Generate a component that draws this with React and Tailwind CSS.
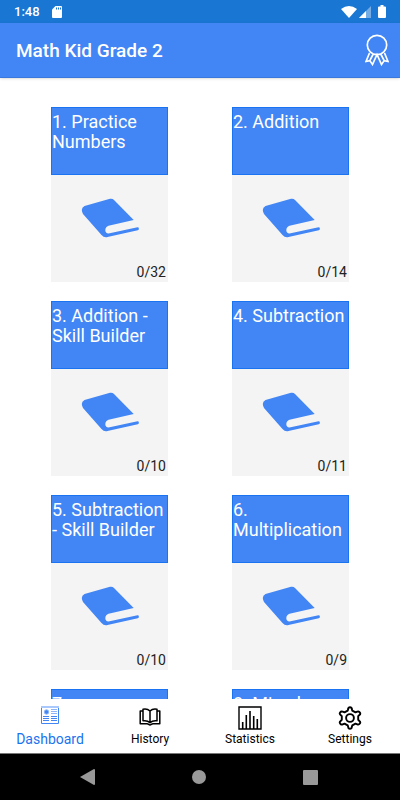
const lessons = [
  { title: '1. Practice Numbers', done: 0, total: 32 },
  { title: '2. Addition', done: 0, total: 14 },
  { title: '3. Addition - Skill Builder', done: 0, total: 10 },
  { title: '4. Subtraction', done: 0, total: 11 },
  { title: '5. Subtraction - Skill Builder', done: 0, total: 10 },
  { title: '6. Multiplication', done: 0, total: 9 },
  { title: '7. Multiplication - Skill Builder', done: 0, total: 10 },
  { title: '8. Mixed Operations', done: 0, total: 10 },
]

const tabs = [
  { name: 'Dashboard', href: '#dashboard', icon: DashboardIcon, active: true },
  { name: 'History', href: '#history', icon: HistoryIcon },
  { name: 'Statistics', href: '#statistics', icon: StatisticsIcon },
  { name: 'Settings', href: '#settings', icon: SettingsIcon },
]

function DashboardIcon() {
  return (
    <svg viewBox="0 0 18 18" className="h-[18px] w-[18px]" fill="none" stroke="#4285f4">
      <path d="M.5 .5h17v17H.5z" fill="#fff" />
      <path d="M0 1h18" strokeWidth="2" stroke="#a9c8fb" />
      <circle cx="5.500" cy="6" r="2.200" fill="#4285f4" stroke="#8db5f8" />
      <path d="M10 3.500h6M10 5.500h6M10 7.500h6" stroke="#8db5f8" />
      <path d="M2 10.500h6M10 10.500h6M2 12.500h6M10 12.500h6M2 14.500h6M10 14.500h6" />
    </svg>
  )
}

function HistoryIcon() {
  return (
    <svg viewBox="0 -2 22 20" className="h-5 w-[22px]" fill="none" stroke="#000" strokeWidth="1.500" strokeLinejoin="round">
      <path d="M11 3C9 1 6.500 .7 4 1.200V12.800c2.500-.4 5 0 7 1.800 2-1.800 4.500-2.200 7-1.800V1.200C15.500 .7 13 1 11 3zM11 3v11.500" />
      <path d="M4 3H1.200v12.800H8c1.500 0 1.800 1.200 3 1.200s1.500-1.200 3-1.200h6.800V3H18" />
    </svg>
  )
}

function StatisticsIcon() {
  return (
    <svg viewBox="0 0 24 24" className="h-6 w-6" fill="none" stroke="#000">
      <path d="M1 1h22v22H1z" strokeWidth="1.400" />
      <path d="M4.700 16v7M8.300 9v14M12 5v18M15.700 10v13M19.300 13v10" strokeWidth="1.600" />
    </svg>
  )
}

function SettingsIcon() {
  return (
    <svg viewBox="0 0 24 24" className="h-6 w-6" fill="none" stroke="#000" strokeWidth="1.900" strokeLinejoin="round">
      <path d="M10.200 3Q10.300 1.200 12 1.200T13.800 3L14.300 4.600L17.500 6.400L19.300 5.700Q21 5 21.900 6.500T21.400 9L20.200 10.200V13.800L21.400 15Q22.800 16.200 21.900 17.500T19.300 18.300L17.500 17.600L14.300 19.400L13.800 21Q13.700 22.800 12 22.800T10.200 21L9.700 19.400L6.500 17.600L4.700 18.300Q3 19 2.100 17.500T2.600 15L3.800 13.800V10.200L2.600 9Q1.200 7.800 2.100 6.500T4.700 5.700L6.500 6.400L9.700 4.600z" />
      <circle cx="12" cy="12" r="3.900" />
    </svg>
  )
}

function AwardIcon() {
  return (
    <svg viewBox="0 0 24 32" className="h-8 w-6" fill="none" stroke="#fff" strokeWidth="1.700">
      <circle cx="12" cy="11" r="9.700" />
      <path d="M4.500 19L1 27.500l3.800-.9L7.500 30.500L12 20.500l4.500 10 2.700-3.900 3.800.9L19.500 19M4.800 26.600L8 20.500M19.200 26.600L16 20.500" />
    </svg>
  )
}

function BookIcon() {
  return (
    <svg viewBox="0 0 58 40" className="h-10 w-[58px]" fill="#4285f4">
      <path d="M3.500 8L29 .8Q31.500 .3 33 2L52.700 22L27.500 27.800C23.500 29 23 35.300 27.500 35.600L56.500 29.300Q57.800 29.200 57.900 30.700Q57.900 31.900 56.800 32.200L26.500 39Q23 39.800 20.500 37L2 16Q-1 10.500 3.500 8z" />
    </svg>
  )
}

function StatusBar() {
  return (
    <div className="flex h-[23px] shrink-0 items-center bg-[#1976d2] px-3.5 text-white">
      <span className="text-[13px] font-medium">1:48</span>
      <svg viewBox="0 0 10 12" className="ml-3 h-3 w-2.5" fill="#fff">
        <path d="M3.500 0H9q1 0 1 1v10q0 1-1 1H1q-1 0-1-1V3.500z" />
        <path d="M4.500 1.500v2M6.500 1.500v2M8.500 1.500v2" stroke="#1976d2" />
      </svg>
      <div className="ml-auto flex items-center">
        <svg viewBox="0 0 16 12" className="h-3 w-4" fill="#fff">
          <path d="M0 3Q8-3 16 3L8 12z" />
        </svg>
        <svg viewBox="0 0 12 12" className="ml-0.5 h-3 w-3" fill="#fff">
          <path d="M12 0v12H0z" opacity=".4" />
          <path d="M7 5v7H0z" />
        </svg>
        <svg viewBox="0 0 8 13" className="ml-[7px] h-[13px] w-2" fill="#fff">
          <path d="M2.500 0h3v1.500H7q1 0 1 1V12q0 1-1 1H1q-1 0-1-1V2.500q0-1 1-1h1.500z" />
        </svg>
      </div>
    </div>
  )
}

function LessonCard({ lesson }) {
  return (
    <button type="button" className="flex h-[175px] w-[117px] flex-col bg-[#f4f4f4] text-left">
      <span className="block h-[68px] w-full border border-[#1a73f0] bg-[#4285f4] pt-1 text-lg/5 text-white">
        {lesson.title}
      </span>
      <span className="flex w-full flex-1 items-start justify-center pt-[23px]">
        <BookIcon />
      </span>
      <span className="w-full pr-0.5 pb-0.5 text-right text-sm/4 text-[#222]">
        {lesson.done}/{lesson.total}
      </span>
    </button>
  )
}

function TabBar() {
  return (
    <nav className="grid h-[54px] shrink-0 grid-cols-4 bg-white">
      {tabs.map((tab) => (
        <a key={tab.name} href={tab.href} className="flex flex-col items-center">
          <span className="flex h-8 items-start pt-[7px]">
            <tab.icon />
          </span>
          <span className={tab.active ? 'text-sm/4 text-[#1a73f0]' : 'text-xs/4 text-black'}>
            {tab.name}
          </span>
        </a>
      ))}
    </nav>
  )
}

function SystemNav() {
  return (
    <div className="flex h-[47px] shrink-0 items-center justify-around border-t border-[#777] bg-black pr-[34px] pl-8">
      <button type="button" aria-label="Back">
        <svg viewBox="0 0 16 16" className="h-4 w-4" fill="#999">
          <path d="M0 8L14 0q1 0 1 1v14q0 1-1 1z" />
        </svg>
      </button>
      <button type="button" aria-label="Home" className="h-3.5 w-3.5 rounded-full bg-[#999]" />
      <button type="button" aria-label="Recent apps" className="h-[15px] w-[15px] rounded-[1px] bg-[#999]" />
    </div>
  )
}

export default function App() {
  return (
    <div className="flex h-screen flex-col overflow-hidden bg-white font-[Roboto,sans-serif]">
      <StatusBar />
      <header className="flex h-[55px] shrink-0 items-center justify-between border-b border-[#3b78dd] bg-[#4285f4] pr-[11px] pl-4 text-white shadow-sm">
        <h1 className="pt-0.5 text-[19px] font-medium">Math Kid Grade 2</h1>
        <button type="button" aria-label="Awards">
          <AwardIcon />
        </button>
      </header>
      <main className="min-h-0 flex-1 overflow-y-auto px-[19px] pt-[29px] [scrollbar-width:none]">
        <div className="grid grid-cols-2 justify-items-center gap-y-[19px]">
          {lessons.map((lesson) => (
            <LessonCard key={lesson.title} lesson={lesson} />
          ))}
        </div>
      </main>
      <TabBar />
      <SystemNav />
    </div>
  )
}
